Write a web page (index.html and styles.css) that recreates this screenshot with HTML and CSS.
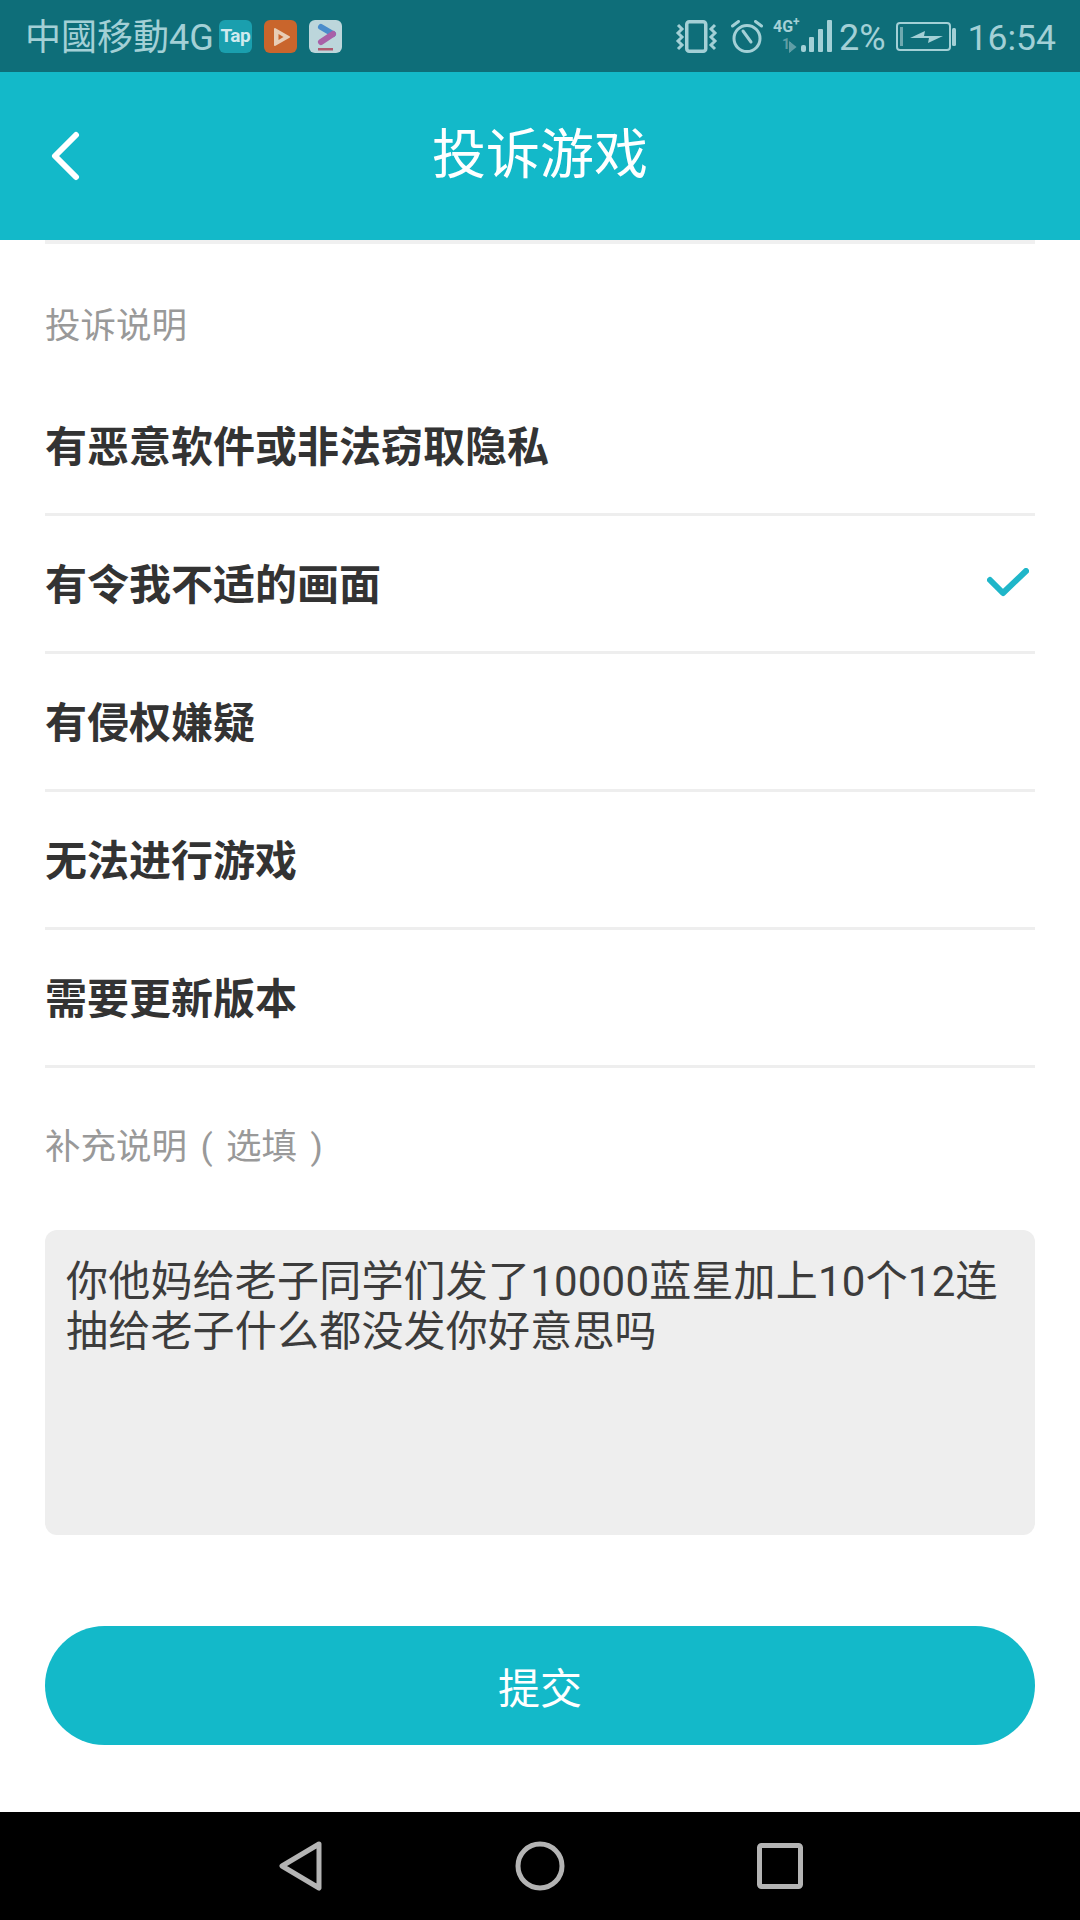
FILE: index.html
```html
<!DOCTYPE html>
<html lang="zh-CN">
<head>
    <meta charset="UTF-8">
    <meta name="viewport" content="width=device-width, initial-scale=1.0">
    <title>投诉游戏</title>
    <link rel="stylesheet" href="styles.css">
</head>
<body>
    <!-- Status bar -->
    <div class="status-bar">
        <div class="status-left">
            <span class="carrier">中國移動4G</span>
            <span class="app-icon app-icon-tap">Tap</span>
            <svg class="app-icon" viewBox="0 0 33 33">
                <rect width="33" height="33" rx="6" fill="#c9652c"/>
                <path d="M11 9l14 8-14 8z" fill="#e8cdb5" stroke="#e8cdb5" stroke-width="2" stroke-linejoin="round"/>
                <path d="M14.500 14l5 3-5 3z" fill="#c9652c"/>
            </svg>
            <svg class="app-icon" viewBox="0 0 33 33">
                <rect width="33" height="33" rx="6" fill="#bcd6db"/>
                <path d="M12 7l12 7" fill="none" stroke="#4a8ccb" stroke-width="6" stroke-linecap="round"/>
                <path d="M24 14l-12 8" fill="none" stroke="#a860a8" stroke-width="6" stroke-linecap="round"/>
                <rect x="9" y="28" width="15" height="2.500" fill="#b05a70"/>
            </svg>
        </div>
        <div class="status-right">
            <svg class="icon-vibrate" viewBox="0 0 43 33" fill="none" stroke="#a3d0d6">
                <rect x="11.750" y="1.750" width="19" height="29.500" rx="2.500" stroke-width="3.500"/>
                <path d="M3 5l4 4-4 4 4 4-4 4 4 4-4 4" stroke-width="3"/>
                <path d="M40 5l-4 4 4 4-4 4 4 4-4 4 4 4" stroke-width="3"/>
            </svg>
            <svg class="icon-alarm" viewBox="0 0 32 33" fill="none" stroke="#a3d0d6" stroke-width="3">
                <circle cx="16" cy="18.500" r="13"/>
                <path d="M12 11l8 11" stroke-linecap="round"/>
                <path d="M1.500 6l6-4.500M30.500 6l-6-4.500" stroke-linecap="round"/>
            </svg>
            <div class="signal">
                <span class="signal-type">4G<sup>+</sup></span>
                <span class="signal-slot">1</span>
                <svg class="signal-bars" viewBox="0 0 60 33">
                    <path d="M17 22v10M17 23l5 4-5 4z" fill="#5f9ea6" stroke="#5f9ea6" stroke-width="2"/>
                    <rect x="28" y="25" width="5" height="7" rx="2" fill="#a3d0d6"/>
                    <rect x="36" y="17" width="5" height="15" rx="1" fill="#a3d0d6"/>
                    <rect x="45" y="9" width="5" height="23" rx="1" fill="#a3d0d6"/>
                    <rect x="54" y="0" width="5" height="32" rx="1" fill="#a3d0d6"/>
                </svg>
            </div>
            <span class="battery-level">2%</span>
            <svg class="icon-battery" viewBox="0 0 60 30" fill="none">
                <rect x="1" y="1" width="53" height="27" rx="3" stroke="#a3d0d6" stroke-width="2"/>
                <rect x="4" y="5" width="3" height="19" fill="#6fa9b0"/>
                <path d="M14 16l15-7-1 5h19l-15 7 1-5z" fill="#a3d0d6"/>
                <rect x="56" y="6" width="4" height="18" rx="1.500" fill="#a3d0d6"/>
            </svg>
            <span class="clock">16:54</span>
        </div>
    </div>

    <!-- Title bar -->
    <header class="title-bar">
        <svg class="back-icon" viewBox="0 0 30 52" fill="none" stroke="#fff" stroke-width="6" stroke-linecap="round" stroke-linejoin="round">
            <path d="M26 5L5 26l21 21"/>
        </svg>
        <h1 class="page-title">投诉游戏</h1>
    </header>

    <!-- Report form -->
    <main class="report-form">
        <h2 class="section-label section-label-first">投诉说明</h2>
        <ul class="reason-list">
            <li class="reason-item">有恶意软件或非法窃取隐私</li>
            <li class="reason-item">
                有令我不适的画面
                <svg class="check-icon" viewBox="0 0 42 30" fill="none" stroke="#1fb6c9" stroke-width="6" stroke-linecap="round" stroke-linejoin="round">
                    <path d="M3 12l13 13L39 3"/>
                </svg>
            </li>
            <li class="reason-item">有侵权嫌疑</li>
            <li class="reason-item">无法进行游戏</li>
            <li class="reason-item">需要更新版本</li>
        </ul>
        <h2 class="section-label section-label-extra">补充说明<span class="paren">(</span>选填<span class="paren">)</span></h2>
        <div class="note-box">你他妈给老子同学们发了10000蓝星加上10个12连抽给老子什么都没发你好意思吗</div>
        <button type="button" class="submit-button">提交</button>
    </main>

    <!-- Navigation bar -->
    <nav class="nav-bar">
        <svg class="nav-back" viewBox="0 0 43 50" fill="none" stroke="#b4b4b4" stroke-width="5" stroke-linejoin="round">
            <path d="M40 3L3 25l37 22z"/>
        </svg>
        <svg class="nav-home" viewBox="0 0 50 50" fill="none" stroke="#b4b4b4" stroke-width="5">
            <circle cx="25" cy="25" r="22"/>
        </svg>
        <svg class="nav-recent" viewBox="0 0 46 46" fill="none" stroke="#b4b4b4" stroke-width="5" stroke-linejoin="round">
            <rect x="2.500" y="2.500" width="41" height="41" rx="2"/>
        </svg>
    </nav>
</body>
</html>
```

FILE: styles.css
```css
* {
    margin: 0;
    padding: 0;
    box-sizing: border-box;
    font-family: Roboto, 'Noto Sans CJK SC', sans-serif;
}

body {
    display: flex;
    flex-direction: column;
    width: 1080px;
    height: 1920px;
    background-color: white;
    overflow: hidden;
}

/* Status bar */
.status-bar {
    display: flex;
    justify-content: space-between;
    align-items: center;
    height: 72px;
    padding: 1px 24px 0 25px;
    background-color: #0e6e79;
    color: #a3d0d6;
}

.status-left,
.status-right {
    display: flex;
    align-items: center;
}

.carrier {
    font-family: Roboto, 'Noto Sans CJK TC', sans-serif;
    font-size: 36px;
    line-height: 40px;
    padding-top: 3px;
    margin-right: 5px;
}

.app-icon {
    display: block;
    width: 33px;
    height: 33px;
    margin-right: 12px;
}

.app-icon-tap {
    background-color: #1a9fae;
    border-radius: 6px;
    color: #cfeaee;
    font-size: 19px;
    font-weight: 700;
    letter-spacing: -0.5px;
    line-height: 31px;
    text-align: center;
}

.icon-vibrate {
    width: 43px;
    height: 33px;
    margin-right: 13px;
}

.icon-alarm {
    width: 32px;
    height: 33px;
    margin-right: 10px;
}

.signal {
    position: relative;
    width: 60px;
    height: 33px;
    margin-right: 6px;
}

.signal-type {
    position: absolute;
    top: -2px;
    left: 0;
    font-size: 16px;
    font-weight: 700;
    line-height: 18px;
}

.signal-type sup {
    font-size: 12px;
    line-height: 0;
}

.signal-slot {
    position: absolute;
    top: 16px;
    left: 9px;
    color: #5f9ea6;
    font-size: 14px;
    font-weight: 700;
    line-height: 16px;
}

.signal-bars {
    display: block;
    width: 60px;
    height: 33px;
}

.battery-level {
    font-size: 36px;
    line-height: 40px;
    padding-top: 3px;
    margin-right: 10px;
}

.icon-battery {
    width: 60px;
    height: 30px;
    margin-right: 12px;
}

.clock {
    font-size: 35.500px;
    line-height: 40px;
    padding-top: 3px;
}

/* Title bar */
.title-bar {
    position: relative;
    display: flex;
    justify-content: center;
    align-items: center;
    height: 168px;
    background-color: #13b9c9;
}

.back-icon {
    position: absolute;
    left: 50px;
    top: 58px;
    width: 30px;
    height: 52px;
}

.page-title {
    color: white;
    font-size: 54px;
    font-weight: 400;
    line-height: 70px;
}

/* Report form */
.report-form {
    flex: 1;
    margin: 0 45px;
    border-top: 4px solid #f0f0f0;
}

.section-label {
    color: #999999;
    font-size: 35.500px;
    font-weight: 400;
    line-height: 50px;
}

.section-label-first {
    padding-top: 57px;
    padding-bottom: 27px;
}

.section-label-extra {
    padding-top: 54px;
    padding-bottom: 58px;
}

.paren {
    display: inline-block;
    width: 1.1em;
    text-align: center;
}

.reason-list {
    list-style: none;
}

.reason-item {
    display: flex;
    justify-content: space-between;
    align-items: center;
    height: 138px;
    padding-bottom: 4px;
    border-bottom: 3px solid #eeeeee;
    color: #333333;
    font-size: 42px;
    font-weight: 700;
}

.check-icon {
    width: 42px;
    height: 30px;
    margin-top: 2px;
    margin-right: 6px;
}

.note-box {
    height: 305px;
    padding: 27px 21px;
    background-color: #eeeeee;
    border-radius: 12px;
    color: #3c3c3c;
    font-size: 42px;
    letter-spacing: 0.2px;
    line-height: 50px;
}

.submit-button {
    display: block;
    width: 100%;
    height: 119px;
    margin-top: 91px;
    background-color: #13b9c9;
    color: white;
    border: none;
    border-radius: 60px;
    font-size: 42px;
}

/* Navigation bar */
.nav-bar {
    display: grid;
    grid-template-columns: repeat(3, 240px);
    justify-content: center;
    justify-items: center;
    align-items: center;
    height: 108px;
    background-color: black;
}

.nav-back {
    width: 43px;
    height: 50px;
}

.nav-home {
    width: 50px;
    height: 50px;
}

.nav-recent {
    width: 46px;
    height: 46px;
}
```
